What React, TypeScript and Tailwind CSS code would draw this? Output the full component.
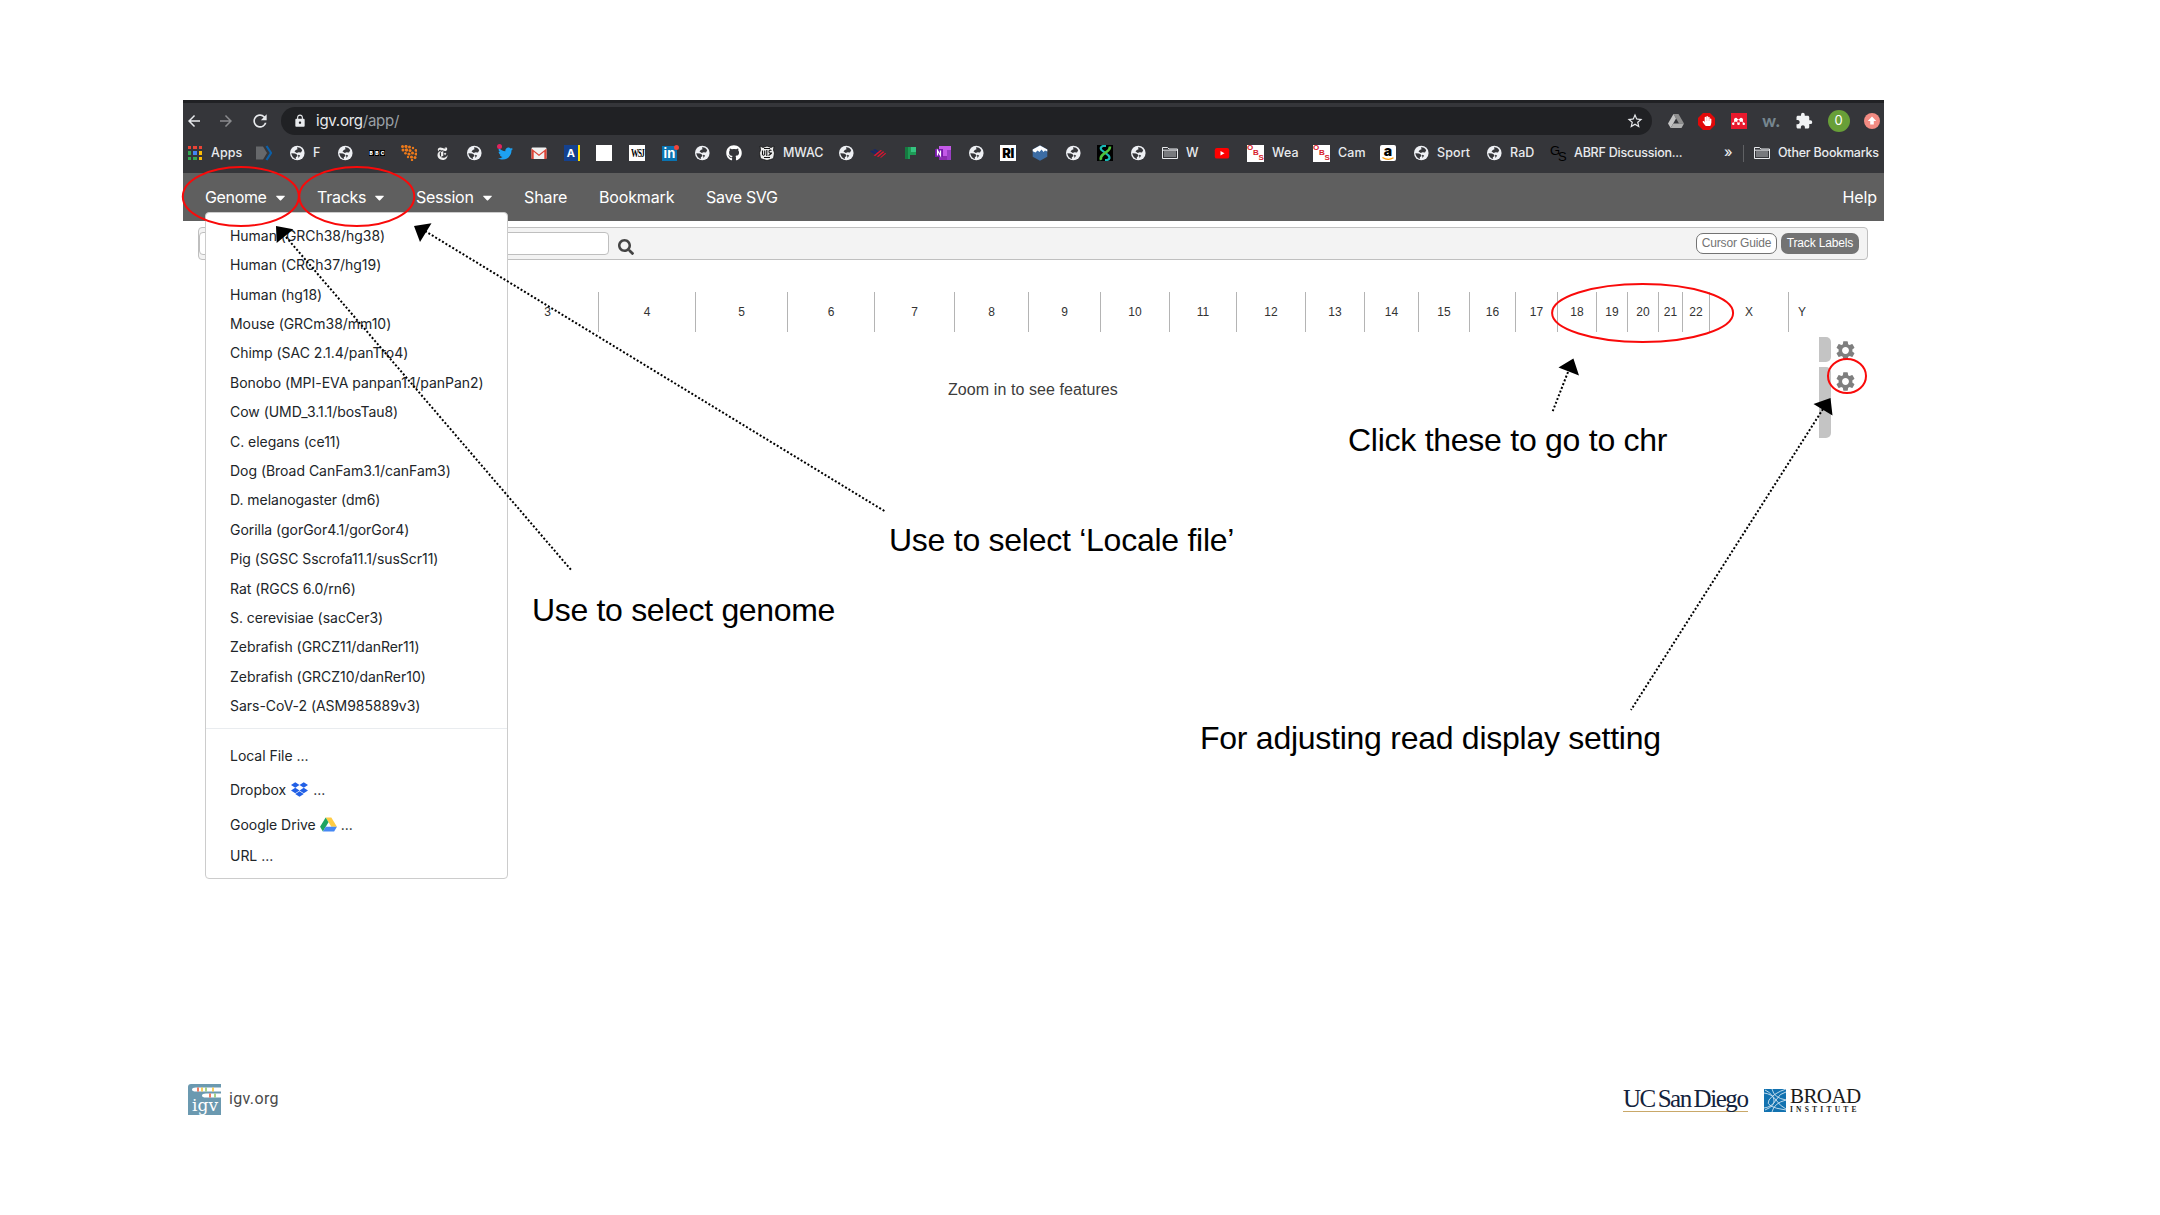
import type { ReactNode } from "react";
import { FaGithub, FaTwitter, FaDropbox, FaSearch, FaCaretDown, FaHandPaper } from "react-icons/fa";
import { MdExtension, MdArrowBack, MdArrowForward, MdRefresh, MdLock, MdStarBorder, MdSettings } from "react-icons/md";
import { SiNewyorktimes, SiMendeley } from "react-icons/si";

const Globe = () => (
  <svg viewBox="0 0 16 16" className="size-4 shrink-0">
    <circle cx="8.300" cy="8" r="7.300" fill="#eef0f4" />
    <path d="M8 2.300q3.500-.3 5.200 3L12 7.500 9.500 7.200 7.800 8 5.500 6.500 6.800 5 8.500 4.200z" fill="#35363a" />
    <path d="M2.300 8.200L6 8.600q2.600.8 2.500 2.400L6.800 12.300 7 14Q3 12.800 2.300 8.200zM9 9.800l2.200.6L9.500 13z" fill="#35363a" />
  </svg>
);

const Folder = () => (
  <svg viewBox="0 0 16 16" className="size-4 shrink-0">
    <path d="M.5 13.500v-11h5l1.500 1.500h8.500v9.500z" fill="#35363a" stroke="#e8eaed" />
    <path d="M2 6h12v6H2z" fill="#77797d" />
    <path d="M1 5.200h14" stroke="#e8eaed" />
  </svg>
);

const AppsGrid = () => (
  <span className="mr-px grid size-[14px] shrink-0 grid-cols-3 gap-[2px]">
    <i className="bg-[#ea4335]" /><i className="bg-[#ea4335]" /><i className="bg-[#ea4335]" />
    <i className="bg-[#34a853]" /><i className="bg-[#4285f4]" /><i className="bg-[#fbbc05]" />
    <i className="bg-[#34a853]" /><i className="bg-[#34a853]" /><i className="bg-[#fbbc05]" />
  </span>
);

const Tag = () => (
  <svg viewBox="0 0 16 16" className="size-4 shrink-0">
    <path d="M0 1.500h7l4 6.500-4 6.500H0z" fill="#66686b" />
    <path d="M10.500 1l4.500 7-4.500 7" fill="none" stroke="#0b5fa8" strokeWidth="2.200" />
  </svg>
);

const Dots = () => (
  <svg viewBox="0 0 16 16" className="size-4 shrink-0 fill-[#ee7a1a]">
    <circle cx="1.500" cy="1.500" r="1.500" /><circle cx="5" cy="1.500" r="1.600" /><circle cx="8.500" cy="2" r="1.500" /><circle cx="12" cy="3" r="1.200" />
    <circle cx="2" cy="5" r="1.500" /><circle cx="5.500" cy="5" r="1.700" /><circle cx="9" cy="5.500" r="1.500" /><circle cx="15" cy="5.500" r="1.400" />
    <circle cx="4.500" cy="8.300" r="1.300" /><circle cx="8" cy="9" r="1.600" /><circle cx="11.500" cy="8" r="1.500" /><circle cx="15" cy="9" r="1.500" />
    <circle cx="7" cy="12" r="1.200" /><circle cx="10.500" cy="12" r="1.600" /><circle cx="14" cy="12.500" r="1.500" /><circle cx="11" cy="15" r="1.200" />
  </svg>
);

const Bbc = () => (
  <span className="flex w-4 shrink-0 gap-px text-[5px] font-bold leading-[6px] text-white">
    <b className="w-[5px] bg-black text-center">B</b><b className="w-[5px] bg-black text-center">B</b><b className="w-[5px] bg-black text-center">C</b>
  </span>
);

const Gmail = () => (
  <svg viewBox="0 0 16 16" className="size-4 shrink-0">
    <rect x=".5" y="2.500" width="15" height="11.500" rx="1.200" fill="#f1f1f1" />
    <path d="M.5 14V3.500L8 9.500l7.500-6V14h-2.200V6.800L8 11 2.700 6.800V14z" fill="#dc4437" />
  </svg>
);

const Twitter = () => (
  <span className="relative size-4 shrink-0">
    <FaTwitter className="mt-px size-[15px] text-[#1da1f2]" />
    <i className="absolute -left-px -top-px size-[5px] rounded-full bg-[#e0245e]" />
  </span>
);

const ABlock = () => (
  <span className="flex size-4 shrink-0 items-center justify-center border-r-2 border-[#ffe100] bg-[#14418f] text-[11px] font-bold text-white">A</span>
);

const LinkedIn = () => (
  <span className="relative flex size-[15px] shrink-0 items-center justify-center bg-[#0a73b1] text-[13px] font-bold leading-none text-white">
    in
    <i className="absolute -right-[2px] -top-px size-[5px] rounded-full bg-[#f0443a]" />
  </span>
);

const Wsj = () => (
  <span className="flex size-4 shrink-0 items-center justify-center bg-white font-['Liberation_Serif'] text-[9px] leading-none tracking-[-1.200px] text-black">
    <b className="inline-block scale-x-85 scale-y-130">WSJ</b>
  </span>
);

const Forest = () => (
  <svg viewBox="0 0 16 16" className="size-4 shrink-0">
    <path d="M1 1l3 1.500L8 1l4 1.500L15 1l-.5 4 1 3-1 5.500-3 1L8 15.500l-3.500-1-3-1L.5 8l1-3z" fill="#ececec" stroke="#111" strokeWidth=".8" />
    <path d="M3.500 5.500v4q1 1.500 2.200 0v-4M7.800 5v6M12.500 5.500q-2.500-1-2.500 1t2 1.500-2.500 2.500M5 12.500h6M5 3.500h6" fill="none" stroke="#111" strokeWidth="1.100" />
  </svg>
);

const Flag = () => (
  <svg viewBox="0 0 16 16" className="size-4 shrink-0">
    <path d="M0 6.500l2-1 5 2.500-2 1.300zM3 5l2-.9L9 6.200 7.500 7.400z" fill="#16286b" />
    <path d="M3.500 10.500L10.500 5l1.500.6-6.700 5.500zM6.800 11.500L13 6.300l1.400.6-6 5.200zM10 12.500L15 8l1.300.4-5.200 4.400z" fill="#dc1431" />
  </svg>
);

const Planner = () => (
  <svg viewBox="0 0 16 16" className="size-4 shrink-0">
    <path d="M2 2h11v8H7v4H2z" fill="#1e9a55" /><path d="M8 2h5v5H8z" fill="#35c481" /><path d="M2 2h3v12H2z" fill="#157a40" />
  </svg>
);

const OneNote = () => (
  <svg viewBox="0 0 16 16" className="size-4 shrink-0">
    <path d="M4 1h12v14H4z" fill="#c45ae8" /><path d="M12 5h4v10h-4z" fill="#9a3fc4" /><path d="M4 11h8v4H4z" fill="#8c2bb0" />
    <path d="M0 4h8v8H0z" fill="#7719aa" /><path d="M2.500 10.500v-5l3 5v-5" fill="none" stroke="#fff" strokeWidth="1.200" />
  </svg>
);

const Peak = () => (
  <svg viewBox="0 0 16 16" className="size-4 shrink-0">
    <path d="M8 .3l7.300 4v7.400L8 15.800.7 11.700V4.300z" fill="#3c6ca3" />
    <path d="M.7 6.200V4.500L8 .5l7.300 4v2l-2.300-1-1.500 1.500L9.500 4.500 7.500 7 5.500 5.500 3.500 7.500z" fill="#fff" />
  </svg>
);

const Helix = () => (
  <svg viewBox="0 0 16 16" className="size-4 shrink-0">
    <rect width="16" height="16" fill="#000" />
    <path d="M9 1H6Q2.500 2.500 4.500 5l7 5.500Q14 14 10 15H8" fill="none" stroke="#19b8b4" strokeWidth="2.200" />
    <path d="M13 1.500q0 3-3 5L6 9.500Q3 12 4 15" fill="none" stroke="#4fc23c" strokeWidth="2.600" />
  </svg>
);

const Obs = () => (
  <span className="relative size-[17px] shrink-0 bg-white font-['Liberation_Sans'] text-[8px] font-bold leading-none text-[#d5202c]">
    <b className="absolute left-0 top-[-1px]">O</b>
    <b className="absolute left-[6px] top-[4px]">B</b>
    <b className="absolute left-[11.500px] top-[9px]">S</b>
  </span>
);

const YouTube = () => (
  <svg viewBox="0 0 16 16" className="size-4 shrink-0">
    <rect x=".8" y="3" width="14.400" height="10.600" rx="2.200" fill="#f00" /><path d="M6.500 6l4 2.300-4 2.300z" fill="#fff" />
  </svg>
);

const Amazon = () => (
  <span className="relative flex size-4 shrink-0 items-start justify-center rounded-[2px] bg-white text-[14px] font-black leading-[11px] text-black">
    a
    <svg viewBox="0 0 16 16" className="absolute inset-0 size-4"><path d="M2.500 12.500q5.500 3.500 11 .3" fill="none" stroke="#f90" strokeWidth="1.300" /></svg>
  </span>
);

const Gs = () => (
  <span className="relative size-4 shrink-0 font-['Liberation_Sans'] text-[13px] leading-none text-black">
    <span className="absolute left-0 top-[-1px]">G</span><span className="absolute left-[8px] top-[5px]">S</span>
  </span>
);

const bookmarks: { icon: ReactNode; label?: string; w: string }[] = [
  { icon: <AppsGrid />, label: "Apps", w: "w-[68px]" },
  { icon: <Tag />, w: "w-[33px]" },
  { icon: <Globe />, label: "F", w: "w-[48px]" },
  { icon: <Globe />, w: "w-[32px]" },
  { icon: <Bbc />, w: "w-[32px]" },
  { icon: <Dots />, w: "w-[33px]" },
  { icon: <SiNewyorktimes className="ml-[2px] size-[13px] shrink-0 text-[#eee]" />, w: "w-[32px]" },
  { icon: <Globe />, w: "w-[32px]" },
  { icon: <Twitter />, w: "w-[33px]" },
  { icon: <Gmail />, w: "w-[33px]" },
  { icon: <ABlock />, w: "w-[32px]" },
  { icon: <span className="size-4 bg-white" />, w: "w-[33px]" },
  { icon: <Wsj />, w: "w-[33px]" },
  { icon: <LinkedIn />, w: "w-[32px]" },
  { icon: <Globe />, w: "w-[32px]" },
  { icon: <FaGithub className="size-4 shrink-0 text-white" />, w: "w-[33px]" },
  { icon: <Forest />, label: "MWAC", w: "w-[79px] tracking-[-0.100px]" },
  { icon: <Globe />, w: "w-[32px]" },
  { icon: <Flag />, w: "w-[33px]" },
  { icon: <Planner />, w: "w-[32px]" },
  { icon: <OneNote />, w: "w-[33px]" },
  { icon: <Globe />, w: "w-[32px]" },
  { icon: <span className="flex size-4 shrink-0 items-center justify-center bg-white text-[13px] font-black leading-none tracking-[-0.500px] text-black">RI</span>, w: "w-[32px]" },
  { icon: <Peak />, w: "w-[33px]" },
  { icon: <Globe />, w: "w-[32px]" },
  { icon: <Helix />, w: "w-[33px]" },
  { icon: <Globe />, w: "w-[32px]" },
  { icon: <Folder />, label: "W", w: "w-[52px]" },
  { icon: <YouTube />, w: "w-[33px]" },
  { icon: <Obs />, label: "Wea", w: "w-[66px]" },
  { icon: <Obs />, label: "Cam", w: "w-[67px]" },
  { icon: <Amazon />, w: "w-[33px]" },
  { icon: <Globe />, label: "Sport", w: "w-[73px]" },
  { icon: <Globe />, label: "RaD", w: "w-[64px]" },
  { icon: <Gs />, label: "ABRF Discussion...", w: "w-[174px] tracking-[-0.230px]" },
];

const DriveGray = () => (
  <svg viewBox="0 0 16 16" className="size-4">
    <path d="M5.500 1h5L16 10.500h-5z" fill="#8e8e8e" /><path d="M5.500 1L0 10.500 2.700 15 8 5.500z" fill="#c4c4c4" /><path d="M5.300 10.500H16L13.500 15H2.700z" fill="#b0b0b0" />
  </svg>
);

const DriveColor = () => (
  <svg viewBox="0 0 18 16" className="h-[15px] w-[17px]">
    <path d="M6 .5h6l6 10h-6z" fill="#fc4" /><path d="M6 .5l-6 10L3 15.500 9 5.500z" fill="#1da362" /><path d="M6 10.500h12l-3 5H3z" fill="#4688f4" />
  </svg>
);

const genomes = [
  "Human (GRCh38/hg38)", "Human (CRCh37/hg19)", "Human (hg18)", "Mouse (GRCm38/mm10)", "Chimp (SAC 2.1.4/panTro4)",
  "Bonobo (MPI-EVA panpan1.1/panPan2)", "Cow (UMD_3.1.1/bosTau8)", "C. elegans (ce11)", "Dog (Broad CanFam3.1/canFam3)",
  "D. melanogaster (dm6)", "Gorilla (gorGor4.1/gorGor4)", "Pig (SGSC Sscrofa11.1/susScr11)", "Rat (RGCS 6.0/rn6)",
  "S. cerevisiae (sacCer3)", "Zebrafish (GRCZ11/danRer11)", "Zebrafish (GRCZ10/danRer10)", "Sars-CoV-2 (ASM985889v3)",
];

const chromosomes: [string, string][] = [
  ["3", "w-[102px]"], ["4", "w-[97px]"], ["5", "w-[92px]"], ["6", "w-[87px]"], ["7", "w-[80px]"], ["8", "w-[74px]"],
  ["9", "w-[72px]"], ["10", "w-[69px]"], ["11", "w-[67px]"], ["12", "w-[69px]"], ["13", "w-[59px]"], ["14", "w-[54px]"],
  ["15", "w-[51px]"], ["16", "w-[46px]"], ["17", "w-[42px]"], ["18", "w-[39px]"], ["19", "w-[31px]"], ["20", "w-[31px]"],
  ["21", "w-[24px]"], ["22", "w-[27px]"], ["X", "w-[79px]"],
];

const Browser = () => (
  <header className="h-[73px] border-t-[3px] border-[#202124] bg-[#35363a] text-[#e8eaed]">
    <div className="flex h-[36px] items-center pl-[2px] pr-[4px]">
      <MdArrowBack className="size-[18px]" />
      <MdArrowForward className="ml-[14px] size-[18px] text-[#8a8b8e]" />
      <MdRefresh className="ml-[15px] size-[20px]" />
      <div className="ml-[11px] flex h-[28px] w-[1371px] items-center rounded-full bg-[#202124] pl-[12px] pr-[8px]">
        <MdLock className="size-[14px]" />
        <span className="ml-[9px] text-[15px] tracking-[-0.250px] text-[#9aa0a6]"><span className="text-[#e8eaed]">igv.org</span>/app/</span>
        <MdStarBorder className="ml-auto size-[18px]" />
      </div>
      <div className="ml-[16px] flex flex-1 items-center justify-between">
        <DriveGray />
        <span className="relative flex size-[17px] items-center justify-center">
          <svg viewBox="0 0 16 16" className="absolute inset-0 size-[17px]"><path d="M4.700 0h6.600L16 4.700v6.600L11.300 16H4.700L0 11.300V4.700z" fill="#e10909" /></svg>
          <FaHandPaper className="relative size-[10px] text-white" />
        </span>
        <span className="ml-px flex size-4 items-center justify-center bg-[#e9192d]"><SiMendeley className="size-[13px] text-white" /></span>
        <span className="ml-px -mt-px font-['Lato'] text-[17px] font-black leading-none text-[#76868f]">w.</span>
        <MdExtension className="ml-px size-[18px] text-[#f1f3f4]" />
        <span className="flex size-[22px] items-center justify-center rounded-full bg-[#689f38] text-[13px] text-white">0</span>
        <svg viewBox="0 0 16 16" className="size-4"><circle cx="8" cy="8" r="8" fill="#f28b82" /><path d="M8 3.500L3.800 8h2.400v3.500h3.600V8h2.400z" fill="#fff" /></svg>
      </div>
    </div>
    <div className="flex h-[28px] items-center pl-[5px] text-[12.500px] font-medium tracking-[0.100px]">
      {bookmarks.map((b, i) => (
        <div key={i} className={`flex h-5 shrink-0 items-center gap-2 whitespace-nowrap ${b.w}`}>{b.icon}{b.label}</div>
      ))}
      <span className="-mt-[3px] w-[19px] text-[14px] leading-none">»</span>
      <span className="h-[17px] w-px bg-[#606164]" />
      <span className="ml-[10px] flex items-center gap-2 whitespace-nowrap tracking-[-0.220px]"><Folder />Other Bookmarks</span>
    </div>
  </header>
);

const navItems: [string, boolean, string][] = [
  ["Genome", true, "w-[112px] tracking-[-0.350px]"], ["Tracks", true, "w-[99px] tracking-[-0.250px]"], ["Session", true, "w-[108px] tracking-[-0.250px]"],
  ["Share", false, "w-[75px]"], ["Bookmark", false, "w-[107px] tracking-[-0.150px]"], ["Save SVG", false, "w-[100px] tracking-[-0.320px]"],
];

const GenomeMenu = () => (
  <div className="absolute left-[22px] top-[39px] h-[667px] w-[303px] rounded-[4px] border border-[#ccc] bg-white pt-[7.500px] text-[14px] tracking-[-0.030px] text-[#212529]">
    {genomes.map((g) => (
      <div key={g} className="flex h-[29.410px] items-center whitespace-nowrap pl-[24px]">{g}</div>
    ))}
    <div className="mt-[7.500px] border-t border-[#e9ecef] pt-[11px]">
      <div className="flex h-[31px] items-center pl-[24px]">Local File ...</div>
      <div className="flex h-[37px] items-center gap-[5px] pl-[24px]">Dropbox <FaDropbox className="size-[17px] text-[#2260e6]" /> ...</div>
      <div className="flex h-[33px] items-center gap-[4px] pl-[24px]">Google Drive <DriveColor /> ...</div>
      <div className="flex h-[29px] items-center pl-[24px]">URL ...</div>
    </div>
  </div>
);

const Viewer = () => (
  <main className="relative">
    <nav className="flex h-[48px] items-center bg-[#5f5f5f] pl-[22px] pr-[7px] text-[16px] tracking-[-0.100px] text-white">
      {navItems.map(([name, caret, w]) => (
        <span key={name} className={`flex items-center whitespace-nowrap ${w}`}>
          {name}{caret && <FaCaretDown className="ml-[7px] h-[15px] w-[13px]" />}
        </span>
      ))}
      <span className="ml-auto">Help</span>
    </nav>
    <div className="ml-[15px] mt-[6px] flex h-[33px] w-[1670px] items-center rounded-[4px] border border-[#bfbfbf] bg-[#f3f3f3] pr-[8px] font-['Liberation_Sans']">
      <div className="h-[23px] w-[410px] rounded-[4px] border border-[#bfbfbf] bg-white" />
      <FaSearch className="ml-[9px] mt-[7px] size-4 text-[#444]" />
      <span className="ml-auto flex h-[21px] w-[81px] items-center justify-center rounded-[7px] border border-[#737373] bg-white pb-px text-[12px] tracking-[-0.150px] text-[#737373]">Cursor Guide</span>
      <span className="ml-[4px] flex h-[21px] w-[78px] items-center justify-center rounded-[7px] bg-[#737373] pb-px text-[12px] tracking-[-0.150px] text-white">Track Labels</span>
    </div>
    <div className="ml-[314px] mt-[32px] flex h-[40px] font-['Liberation_Sans'] text-[12px] text-[#333]">
      {chromosomes.map(([c, w]) => (
        <div key={c} className={`flex items-center justify-center border-r border-[#b4b4b4] ${w}`}>{c}</div>
      ))}
      <div className="flex w-[26px] items-center justify-center">Y</div>
    </div>
    <div className="flex pl-[765px] pt-[5px]">
      <p className="w-[871px] pt-[44px] font-['Liberation_Sans'] text-[16px] leading-[18px] tracking-[0.080px] text-[#3c3c3c]">Zoom in to see features</p>
      <div className="flex flex-col gap-[5px]">
        <div className="h-[25px] w-[12px] rounded-r-[5px] bg-[#c4c4c4]" />
        <div className="h-[71px] w-[12px] rounded-r-[5px] bg-[#c4c4c4]" />
      </div>
      <div className="ml-[3px] flex flex-col gap-[8px] pt-[2px] text-[#7f7f7f]">
        <MdSettings className="size-[23px]" />
        <MdSettings className="size-[23px]" />
      </div>
    </div>
    <GenomeMenu />
  </main>
);

const Annotations = () => (
  <div className="absolute inset-0 font-['Liberation_Sans'] text-[32px] leading-[36px] tracking-[-0.260px] text-black">
    <svg viewBox="0 0 2160 1215" className="absolute inset-0 size-full">
      <g fill="none" stroke="#f90a0a" strokeWidth="2">
        <ellipse cx="240.800" cy="196.500" rx="58" ry="29.500" />
        <ellipse cx="356.800" cy="196.500" rx="57.500" ry="29.500" />
        <ellipse cx="1642.600" cy="313" rx="90.500" ry="29" />
        <ellipse cx="1847" cy="376" rx="19" ry="17" />
      </g>
      <g fill="none" stroke="#000" strokeWidth="2" strokeDasharray="2 2">
        <path d="M286 237L572 571" /><path d="M425 231L886 512" /><path d="M1568 372L1552 413" /><path d="M1823 409L1631 710" />
      </g>
      <path d="M276 226l17.300 3.300-16.600 13.700zM414 226l17.500-2.700L420 242zM1573.400 358.500l5.600 17-20.500-8zM1830.500 398l2 17.500-19-11.500z" />
    </svg>
    <p className="absolute left-[532px] top-[592px] whitespace-nowrap tracking-[-0.320px]">Use to select genome</p>
    <p className="absolute left-[889px] top-[522px] whitespace-nowrap">Use to select ‘Locale file’</p>
    <p className="absolute left-[1348px] top-[422px] whitespace-nowrap">Click these to go to chr</p>
    <p className="absolute left-[1200px] top-[720px] whitespace-nowrap">For adjusting read display setting</p>
  </div>
);

const Footer = () => (
  <footer className="absolute inset-x-0 top-[1084px] flex h-[32px] pl-[188px]">
    <svg viewBox="0 0 33 31" className="h-[31px] w-[33px]">
      <path d="M3 0h30v31H0V3q0-3 3-3z" fill="#6b99b0" />
      <path d="M33 3.500H8q-4 0-4 2t4 2h25zM33 9.500H18q-4 0-4 2t4 2h15z" fill="#fff" />
      <path d="M10 3.500v4M22 9.500v4" stroke="#f0502c" strokeWidth="1.500" /><path d="M14 3.500v4M25 3.500v4" stroke="#f6c02c" strokeWidth="1.500" /><path d="M18 3.500v4M27 9.500v4" stroke="#8cc463" strokeWidth="1.500" />
      <text x="4" y="27" textLength="26" fill="#fff" fontFamily="DejaVu Serif" fontSize="17">igv</text>
    </svg>
    <span className="ml-[8px] w-[1394px] pt-[4px] font-['Roboto'] text-[16px] leading-[22px] tracking-[0.350px] text-[#4a4a4a]">igv.org</span>
    <span className="h-[28px] w-[125px] whitespace-nowrap border-b border-[#c9a869] font-['Liberation_Serif'] text-[25px] leading-[30px] tracking-[-1.450px] text-[#13233d] [word-spacing:-2px]">UC San Diego</span>
    <svg viewBox="0 0 22 23" className="ml-[16px] mt-[5px] h-[23px] w-[22px]">
      <rect width="22" height="23" fill="#1272b0" />
      <path d="M0 4q8 1 12 7t10 9M0 19q8-1 12-8t10-8M1 1q8 4 9 10t-9 10M8 0q2 9 14 11M8 23q2-9 14-12M22 0Q10 4 5 11t17 10" fill="none" stroke="#cfe3f0" strokeWidth=".9" />
    </svg>
    <span className="ml-[4px] flex flex-col pt-[2px] font-['Liberation_Serif'] text-[#1a1a1a]">
      <span className="text-[21px] leading-[20px] tracking-[-0.600px]">BROAD</span>
      <span className="text-[7.500px] font-bold leading-[8px] tracking-[3.200px]">INSTITUTE</span>
    </span>
  </footer>
);

export default function App() {
  return (
    <div className="relative h-[1215px] w-[2160px] overflow-hidden bg-white font-['Inter',sans-serif]">
      <div className="ml-[183px] w-[1701px] pt-[100px]">
        <Browser />
        <Viewer />
      </div>
      <Footer />
      <Annotations />
    </div>
  );
}
